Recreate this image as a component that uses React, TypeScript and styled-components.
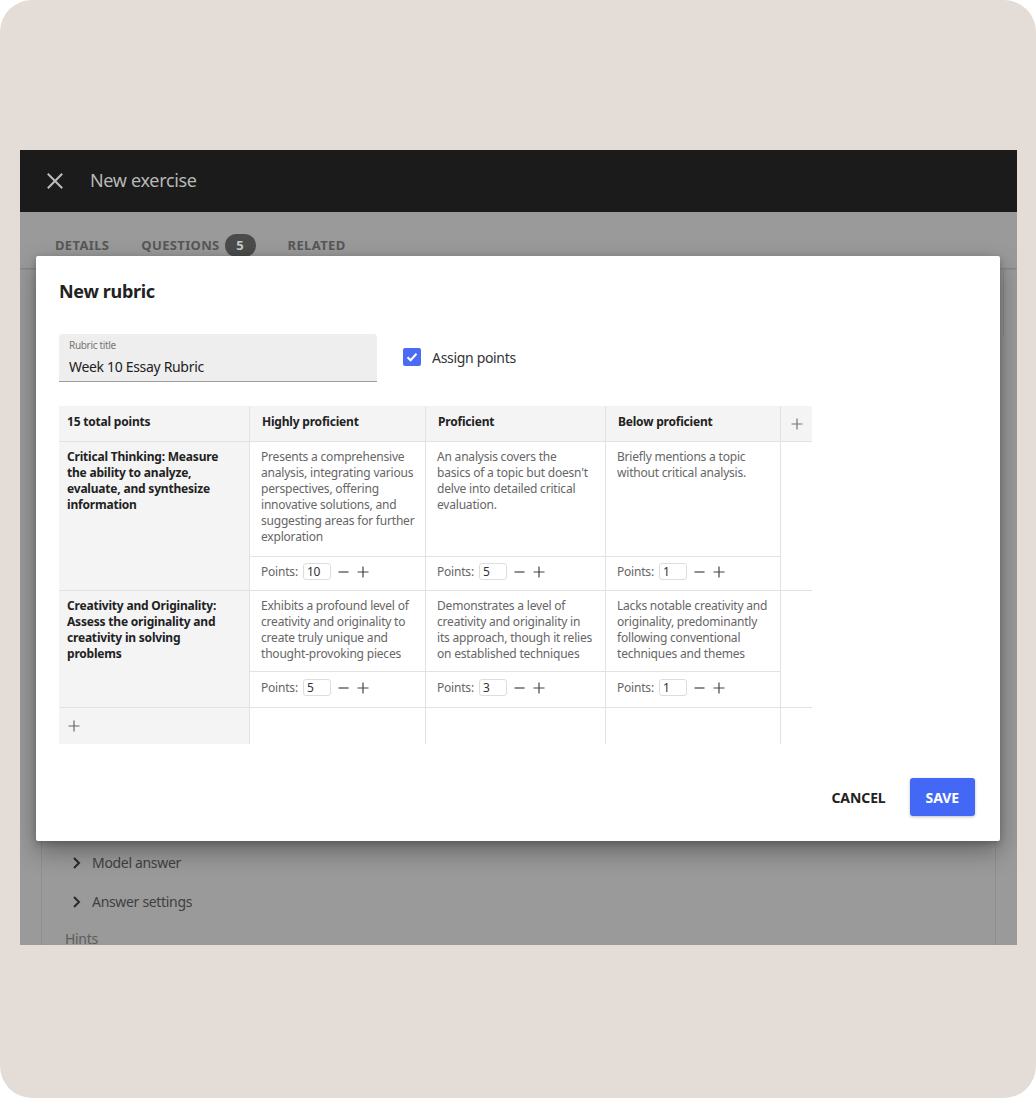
import React from 'react';
import styled, { createGlobalStyle } from 'styled-components';

const GlobalStyle = createGlobalStyle`
  html, body {
    margin: 0;
    padding: 0;
    background: #ffffff;
  }

  body {
    font-family: 'Noto Sans', 'Open Sans', sans-serif;
    letter-spacing: -0.02em;
    -webkit-font-smoothing: antialiased;
  }

  * {
    box-sizing: border-box;
  }
`;

interface Level {
  description: string;
  points: string;
}

interface Criterion {
  title: string;
  levels: Level[];
}

const levelNames = ['Highly proficient', 'Proficient', 'Below proficient'];

// line breaks follow the column widths of the editor
const criteria: Criterion[] = [
  {
    title: 'Critical Thinking: Measure\nthe ability to analyze,\nevaluate, and synthesize\ninformation',
    levels: [
      {
        description:
          'Presents a comprehensive\nanalysis, integrating various\nperspectives, offering\ninnovative solutions, and\nsuggesting areas for further\nexploration',
        points: '10',
      },
      {
        description: "An analysis covers the\nbasics of a topic but doesn't\ndelve into detailed critical\nevaluation.",
        points: '5',
      },
      { description: 'Briefly mentions a topic\nwithout critical analysis.', points: '1' },
    ],
  },
  {
    title: 'Creativity and Originality:\nAssess the originality and\ncreativity in solving\nproblems',
    levels: [
      {
        description: 'Exhibits a profound level of\ncreativity and originality to\ncreate truly unique and\nthought-provoking pieces',
        points: '5',
      },
      {
        description: 'Demonstrates a level of\ncreativity and originality in\nits approach, though it relies\non established techniques',
        points: '3',
      },
      {
        description: 'Lacks notable creativity and\noriginality, predominantly\nfollowing conventional\ntechniques and themes',
        points: '1',
      },
    ],
  },
];

const Frame = styled.div`
  width: 1036px;
  height: 1098px;
  background: #e4ddd7;
  border-radius: 32px;
  padding: 150px 19px 0 20px;
  overflow: hidden;
`;

const Screen = styled.div`
  height: 795px;
  display: flex;
  flex-direction: column;
  overflow: hidden;
`;

const AppBar = styled.header`
  height: 62px;
  flex-shrink: 0;
  background: #1b1b1b;
  display: flex;
  align-items: center;
  padding: 0 0 0 23px;
  gap: 23px;
  color: #bdbdbd;
`;

const AppTitle = styled.span`
  font-size: 18px;
  color: #b8b8b8;
  margin-top: -2px;
`;

const Content = styled.main`
  position: relative;
  flex: 1;
  background: #9a9a9a;
  display: flex;
  flex-direction: column;
`;

const TabBar = styled.nav`
  height: 56px;
  flex-shrink: 0;
  display: flex;
  align-items: center;
  padding: 10px 0 0 35px;
  gap: 32px;
  box-shadow: 0 1px 2px rgba(0, 0, 0, 0.18);
`;

const Tab = styled.span`
  display: flex;
  align-items: center;
  font-size: 13px;
  font-weight: 700;
  color: #575757;
  letter-spacing: 0.35px;
`;

const Badge = styled.span`
  margin-left: 5px;
  width: 31px;
  height: 23px;
  border-radius: 12px;
  background: #4b4b4b;
  color: #c9c9c9;
  font-size: 13px;
  display: flex;
  align-items: center;
  justify-content: center;
`;

const Card = styled.div`
  height: 68px;
  flex-shrink: 0;
  margin: 0 13px 0 16px;
  border: 1px solid #8c8c8c;
  border-bottom: none;
  border-radius: 2px 2px 0 0;
`;

const Panel = styled.div`
  flex: 1;
  margin: 0 21px;
  border-left: 1px solid #8e8e8e;
  border-right: 1px solid #8e8e8e;
  padding-top: 507px;
`;

const Expander = styled.div`
  height: 39px;
  display: flex;
  align-items: center;
  gap: 9px;
  padding-left: 29px;
  font-size: 14px;
  color: #3f3f3f;
`;

const Hint = styled.div`
  padding: 11px 0 0 23px;
  font-size: 14px;
  line-height: 14px;
  color: #5d5d5d;
`;

const Dialog = styled.section`
  position: absolute;
  left: 16px;
  top: 44px;
  width: 964px;
  background: #ffffff;
  border-radius: 2px;
  box-shadow: 0 10px 24px rgba(0, 0, 0, 0.35), 0 2px 6px rgba(0, 0, 0, 0.2);
  padding: 23px 25px 25px 23px;
`;

const DialogTitle = styled.h2`
  margin: 0;
  font-size: 18px;
  line-height: 24px;
  font-weight: 700;
  color: #222222;
`;

const TitleRow = styled.div`
  display: flex;
  align-items: center;
  gap: 26px;
  margin-top: 31px;
`;

const TextField = styled.label`
  width: 318px;
  height: 48px;
  background: #eeeeee;
  border-bottom: 1px solid #9e9e9e;
  border-radius: 3px 3px 0 0;
  padding: 4px 10px 0;
  display: flex;
  flex-direction: column;
`;

const FieldLabel = styled.span`
  font-size: 10px;
  line-height: 14px;
  color: #757575;
`;

const FieldValue = styled.span`
  font-size: 14px;
  line-height: 20px;
  margin-top: 5px;
  color: #222222;
`;

const CheckRow = styled.label`
  display: flex;
  align-items: center;
  gap: 11px;
  font-size: 14px;
  color: #333333;
  margin-top: -2px;
`;

const CheckBox = styled.span`
  width: 18px;
  height: 18px;
  border-radius: 2px;
  background: #4a6cf5;
  display: flex;
  align-items: center;
  justify-content: center;
`;

const Table = styled.div`
  margin-top: 24px;
  width: 753px;
  display: grid;
  grid-template-columns: 190px 175px 179px 174px 31px;
  grid-template-rows: 35px 114px 33px 80px 35px 36px;
  gap: 1px;
  background: #e2e2e2;
  letter-spacing: -0.2px;
`;

const HeadCell = styled.div`
  background: #f4f4f4;
  font-size: 12px;
  line-height: 16px;
  font-weight: 700;
  color: #222222;
  padding: 8px 12px 0;
  &:first-child {
    padding-left: 8px;
  }
`;

const AddColumn = styled.div`
  background: #f4f4f4;
  display: flex;
  justify-content: center;
  padding-top: 12px;
  color: #777777;
`;

const CriterionCell = styled.div<{ $row: number }>`
  grid-column: 1;
  grid-row: ${(p) => p.$row} / span 2;
  background: #f4f4f4;
  padding: 7px 8px 0 8px;
  font-size: 12px;
  line-height: 16px;
  font-weight: 700;
  color: #222222;
  white-space: pre-line;
`;

const DescCell = styled.div`
  background: #ffffff;
  padding: 7px 4px 0 11px;
  font-size: 12px;
  line-height: 16px;
  color: #666666;
  white-space: pre-line;
`;

const PointsCell = styled.div`
  background: #ffffff;
  display: flex;
  align-items: center;
  padding: 0 0 4px 11px;
  font-size: 12px;
  color: #666666;
`;

const PointsInput = styled.span`
  margin-left: 5px;
  width: 28px;
  height: 17px;
  border: 1px solid #dddddd;
  border-radius: 3px;
  padding-left: 3px;
  line-height: 15px;
  color: #333333;
`;

const Stepper = styled.span`
  display: flex;
  align-items: center;
  gap: 8px;
  margin-left: 7px;
  color: #444444;
`;

const EmptyCell = styled.div<{ $row: number }>`
  grid-column: 5;
  grid-row: ${(p) => p.$row} / span 2;
  background: #ffffff;
`;

const AddRowCell = styled.div`
  background: #f4f4f4;
  display: flex;
  align-items: center;
  padding-left: 9px;
  color: #666666;
`;

const BlankCell = styled.div`
  background: #ffffff;
`;

const Actions = styled.div`
  display: flex;
  justify-content: flex-end;
  align-items: center;
  gap: 16px;
  margin-top: 34px;
`;

const Button = styled.button<{ $primary?: boolean }>`
  height: 38px;
  border: none;
  border-radius: 3px;
  padding: 0 ${(p) => (p.$primary ? '16px' : '8px')};
  font-family: inherit;
  font-size: 14px;
  font-weight: 700;
  letter-spacing: -0.1px;
  color: ${(p) => (p.$primary ? '#ffffff' : '#222222')};
  background: ${(p) => (p.$primary ? '#4468f6' : 'transparent')};
  box-shadow: ${(p) => (p.$primary ? '0 1px 3px rgba(0, 0, 0, 0.25)' : 'none')};
  cursor: pointer;
`;

const CloseIcon = () => (
  <svg width="24" height="24" viewBox="0 0 24 24" fill="none" stroke="currentColor" strokeWidth="2" strokeLinecap="square">
    <path d="M5.5 5.5 L18.5 18.5 M18.5 5.5 L5.5 18.5" />
  </svg>
);

const ChevronIcon = () => (
  <svg width="12" height="14" viewBox="0 0 12 14" fill="none" stroke="#2a2a2a" strokeWidth="2">
    <path d="M3 2 L8 7 L3 12" />
  </svg>
);

const PlusIcon = ({ size = 12 }: { size?: number }) => (
  <svg width={size} height={size} viewBox="0 0 12 12" fill="none" stroke="currentColor" strokeWidth="1.2">
    <path d="M6 0.5 V11.5 M0.5 6 H11.5" />
  </svg>
);

const MinusIcon = () => (
  <svg width="11" height="12" viewBox="0 0 11 12" fill="none" stroke="currentColor" strokeWidth="1.2">
    <path d="M0.5 6 H10.5" />
  </svg>
);

const CheckIcon = () => (
  <svg width="14" height="14" viewBox="0 0 14 14" fill="none" stroke="#ffffff" strokeWidth="2">
    <path d="M2.5 7.2 L5.6 10.2 L11.5 3.8" />
  </svg>
);

export default function App() {
  return (
    <>
      <GlobalStyle />
      <Frame>
        <Screen>
          <AppBar>
            <CloseIcon />
            <AppTitle>New exercise</AppTitle>
          </AppBar>
          <Content>
            <TabBar>
              <Tab>DETAILS</Tab>
              <Tab>
                QUESTIONS
                <Badge>5</Badge>
              </Tab>
              <Tab>RELATED</Tab>
            </TabBar>
            <Card />
            <Panel>
              <Expander>
                <ChevronIcon />
                Model answer
              </Expander>
              <Expander>
                <ChevronIcon />
                Answer settings
              </Expander>
              <Hint>Hints</Hint>
            </Panel>

            <Dialog>
              <DialogTitle>New rubric</DialogTitle>
              <TitleRow>
                <TextField>
                  <FieldLabel>Rubric title</FieldLabel>
                  <FieldValue>Week 10 Essay Rubric</FieldValue>
                </TextField>
                <CheckRow>
                  <CheckBox>
                    <CheckIcon />
                  </CheckBox>
                  Assign points
                </CheckRow>
              </TitleRow>

              <Table>
                <HeadCell>15 total points</HeadCell>
                {levelNames.map((name) => (
                  <HeadCell key={name}>{name}</HeadCell>
                ))}
                <AddColumn>
                  <PlusIcon />
                </AddColumn>

                {criteria.map((criterion, i) => {
                  const row = 2 + i * 2;
                  return (
                    <React.Fragment key={criterion.title}>
                      <CriterionCell $row={row}>{criterion.title}</CriterionCell>
                      {criterion.levels.map((level, j) => (
                        <DescCell key={j} style={{ gridRow: row, gridColumn: j + 2 }}>
                          {level.description}
                        </DescCell>
                      ))}
                      <EmptyCell $row={row} />
                      {criterion.levels.map((level, j) => (
                        <PointsCell key={j} style={{ gridRow: row + 1, gridColumn: j + 2 }}>
                          Points:
                          <PointsInput>{level.points}</PointsInput>
                          <Stepper>
                            <MinusIcon />
                            <PlusIcon />
                          </Stepper>
                        </PointsCell>
                      ))}
                    </React.Fragment>
                  );
                })}

                <AddRowCell>
                  <PlusIcon />
                </AddRowCell>
                <BlankCell />
                <BlankCell />
                <BlankCell />
                <BlankCell />
              </Table>

              <Actions>
                <Button>CANCEL</Button>
                <Button $primary>SAVE</Button>
              </Actions>
            </Dialog>
          </Content>
        </Screen>
      </Frame>
    </>
  );
}
